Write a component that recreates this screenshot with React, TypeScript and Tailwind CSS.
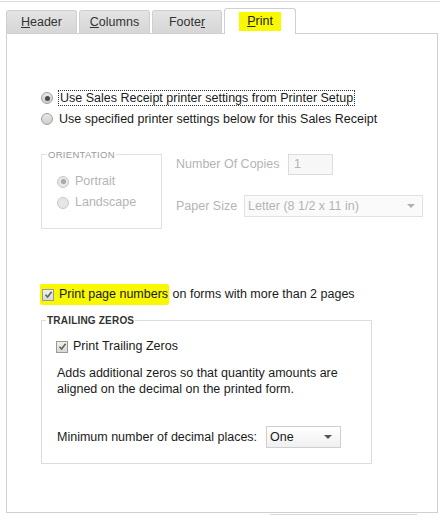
import React from 'react';

const font = { fontFamily: '"Liberation Sans", Arial, sans-serif' };

function Radio({ checked, disabled }: { checked?: boolean; disabled?: boolean }) {
  return (
    <span
      className={`inline-flex items-center justify-center w-[12px] h-[12px] rounded-full border shrink-0 ${
        disabled ? 'border-[#c8c8c8] bg-[#e6e6e6]' : 'border-[#a0a0a0] bg-gradient-to-b from-[#e8e8e8] to-[#cfcfcf]'
      }`}
    >
      {checked && (
        <span className={`w-[5px] h-[5px] rounded-full ${disabled ? 'bg-[#a8a8a8]' : 'bg-[#4a4a4a]'}`} />
      )}
    </span>
  );
}

function Checkbox() {
  return (
    <span className="inline-flex items-center justify-center w-[12px] h-[12px] border border-[#9a9a9a] bg-gradient-to-b from-[#f0f0f0] to-[#d8d8d8] shrink-0">
      <svg width="9" height="9" viewBox="0 0 9 9">
        <path d="M1.5 4.8 L3.6 7 L7.6 1.8" fill="none" stroke="#5b6b4a" strokeWidth="1.6" />
      </svg>
    </span>
  );
}

export default function App() {
  return (
    <div className="w-[445px] h-[516px] bg-white relative overflow-hidden text-[12.5px] leading-[15px] text-[#1a1a1a]" style={font}>
      <div className="h-[8px] border-t border-[#d8d8d8] mt-px w-[440px]" />
      <div className="flex items-end gap-[2px] pl-[6px] h-[24px]">
        <div className="flex items-center justify-center w-[71px] h-[23px] rounded-t-[3px] border border-b-0 bg-gradient-to-b from-[#e4e4e4] to-[#d6d6d6] border-[#cfcfcf] text-[#333]">
          <span><span className="underline">H</span>eader</span>
        </div>
        <div className="flex items-center justify-center w-[71px] h-[23px] rounded-t-[3px] border border-b-0 bg-gradient-to-b from-[#e4e4e4] to-[#d6d6d6] border-[#cfcfcf] text-[#333]">
          <span><span className="underline">C</span>olumns</span>
        </div>
        <div className="flex items-center justify-center w-[70px] h-[23px] rounded-t-[3px] border border-b-0 bg-gradient-to-b from-[#e4e4e4] to-[#d6d6d6] border-[#cfcfcf] text-[#333]">
          <span>Foote<span className="underline">r</span></span>
        </div>
        <div className="flex items-center justify-center w-[72px] h-[26px] rounded-t-[3px] border border-b-0 bg-white border-[#d0d0d0] relative z-10 -mb-px">
          <span className="bg-[#f8f800] px-[8px] pt-[2px] pb-[2px] text-[#222]">
            <span className="underline">P</span>rint
          </span>
        </div>
      </div>
      <div className="ml-[6px] w-[432px] h-[480px] border border-[#d0d0d0] bg-white flex flex-col pl-[34px]">
        <div className="mt-[56px] flex flex-col gap-[5px]">
          <div className="flex items-center gap-[5px] h-[16px]">
            <Radio checked />
            <span className="border border-dotted border-[#333] px-px leading-[14px]">
              Use Sales Receipt printer settings from Printer Setup
            </span>
          </div>
          <div className="flex items-center gap-[6px] h-[16px]">
            <Radio />
            <span>Use specified printer settings below for this Sales Receipt</span>
          </div>
        </div>

        <div className="flex mt-[20px] text-[#b4b4b4]">
          <fieldset className="w-[121px] h-[82px] border border-[#e0e0e0] pl-[15px] pt-[12px] flex flex-col gap-[6px]">
            <legend className="text-[9.5px] tracking-[0.3px] px-[1px] -ml-[10px] text-[#9a9a9a]">ORIENTATION</legend>
            <div className="flex items-center gap-[6px]">
              <Radio checked disabled />
              <span>Portrait</span>
            </div>
            <div className="flex items-center gap-[6px]">
              <Radio disabled />
              <span>Landscape</span>
            </div>
          </fieldset>
          <div className="ml-[14px] pt-[7px] flex flex-col gap-[20px]">
            <div className="flex items-center">
              <span className="w-[112px]">Number Of Copies</span>
              <span className="w-[45px] h-[21px] border border-[#dcdcdc] bg-[#f7f7f7] pl-[5px] leading-[19px]">1</span>
            </div>
            <div className="flex items-center">
              <span className="w-[68px]">Paper Size</span>
              <span className="w-[179px] h-[22px] border border-[#e2e2e2] bg-[#fafafa] pl-[3px] flex items-center justify-between pr-[7px]">
                <span>Letter (8 1/2 x 11 in)</span>
                <svg width="8" height="4" viewBox="0 0 8 4">
                  <path d="M0 0 L8 0 L4 4 Z" fill="#b0b0b0" />
                </svg>
              </span>
            </div>
          </div>
        </div>

        <div className="mt-[55px] flex items-center -ml-[1px]">
          <span className="bg-[#f8f800] flex items-center gap-[5px] pl-[2px] pr-[1px] py-[3px] rounded-[2px]">
            <Checkbox />
            <span>Print page numbers</span>
          </span>
          <span>&nbsp;on forms with more than 2 pages</span>
        </div>

        <fieldset className="mt-[8px] w-[331px] h-[151px] border border-[#dcdcdc] pl-[14px] flex flex-col">
          <legend className="text-[10px] font-bold text-[#333] px-[1px] -ml-[10px] tracking-[0.2px]">TRAILING ZEROS</legend>
          <div className="flex items-center gap-[5px] mt-[11px]">
            <Checkbox />
            <span>Print Trailing Zeros</span>
          </div>
          <p className="mt-[11px] ml-[1px] leading-[16px] w-[300px]">
            Adds additional zeros so that quantity amounts are aligned on the decimal on the printed form.
          </p>
          <div className="flex items-center mt-[29px] ml-[1px]">
            <span className="w-[209px]">Minimum number of decimal places:</span>
            <span className="w-[75px] h-[22px] border border-[#cfcfcf] bg-gradient-to-b from-[#ffffff] to-[#f0f0f0] pl-[3px] pr-[8px] flex items-center justify-between">
              <span>One</span>
              <svg width="8" height="4" viewBox="0 0 8 4">
                <path d="M0 0 L8 0 L4 4 Z" fill="#555" />
              </svg>
            </span>
          </div>
        </fieldset>
      </div>
      <div className="absolute left-[270px] top-[514px] w-[147px] h-[2px] border-t border-[#d8d8d8]" />
    </div>
  );
}
